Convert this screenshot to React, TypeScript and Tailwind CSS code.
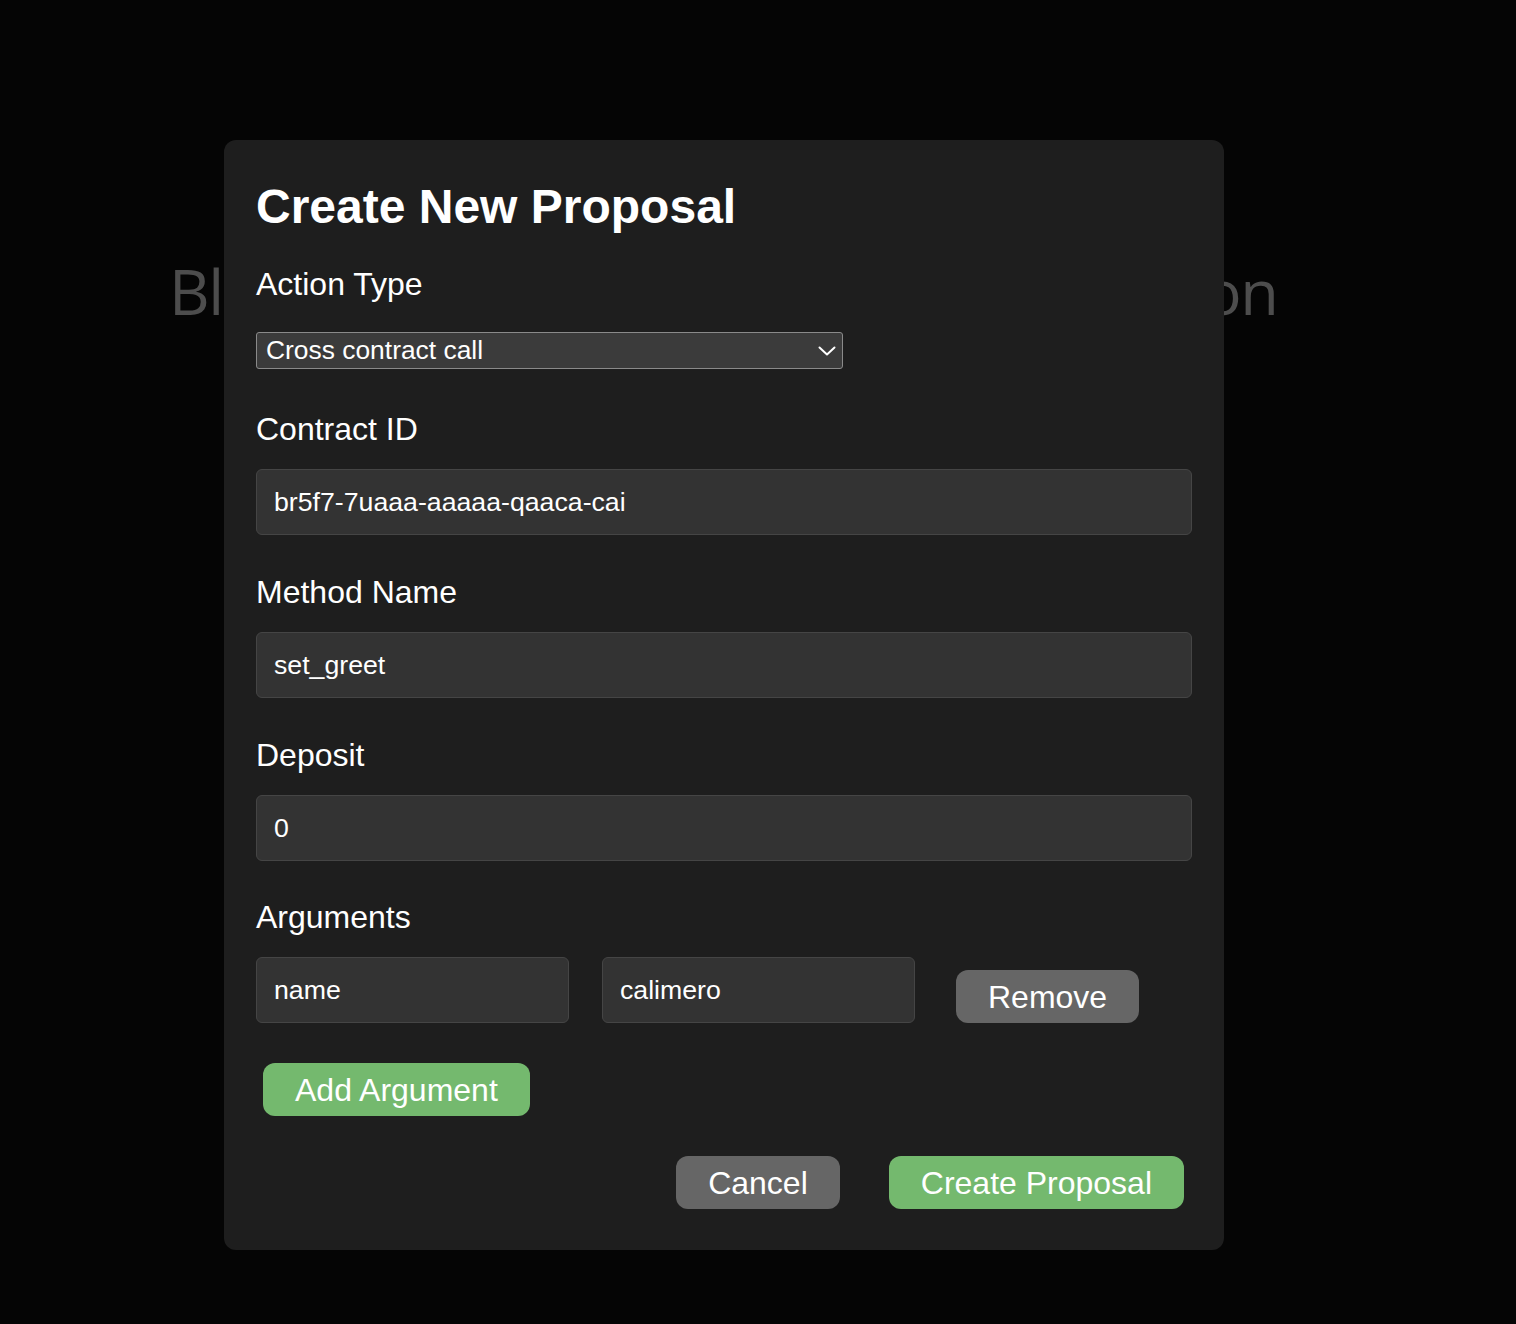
import { useState } from "react";

const sans = "font-['Liberation_Sans',Arial,sans-serif]";

const Field = ({ label, value, top }: { label: string; value: string; top: string }) => (
  <div>
    <label className={`block ${top} text-[32px] leading-none text-white`}>{label}</label>
    <input
      defaultValue={value}
      className="mt-6 block h-[66px] w-full rounded-md border border-[#454545] bg-[#333333] pl-[17px] pr-4 text-[26.7px] text-white outline-none"
    />
  </div>
);

const App = () => {
  const [args] = useState([{ key: "name", value: "calimero" }]);

  return (
    <div className={`relative h-[1324px] overflow-hidden bg-[#050505] ${sans}`}>
      <h1 className="whitespace-nowrap pl-[169px] pt-[259px] font-['Open_Sans',sans-serif] text-[63px] leading-none tracking-[-1.4px] text-[#4d4d4d]">
        Blockchain Proposals Demo Application
      </h1>

      <div className="absolute inset-0 pl-[224px] pt-[140px]">
        <div className="h-[1110px] w-[1000px] rounded-xl bg-[#1e1e1e] px-8 pt-8">
          <h2 className="mt-[11px] text-[48px] font-bold leading-none text-white">
            Create New Proposal
          </h2>

          <label className="mt-[37px] block text-[32px] leading-none text-white">
            Action Type
          </label>
          <div className="relative mt-8 w-[587px]">
            <select
              defaultValue="cross"
              className="block h-[37px] w-full appearance-none rounded-[3px] border border-[#8a8a8a] bg-[#3b3b3b] pl-[9px] text-[26.4px] leading-none text-white outline-none"
            >
              <option value="cross">Cross contract call</option>
              <option value="transfer">Transfer</option>
            </select>
            <svg
              className="pointer-events-none absolute right-[7px] top-[14px]"
              width="18"
              height="10"
              viewBox="0 0 18 10"
              fill="none"
            >
              <path d="M1.5 1.5 L9 8.5 L16.5 1.5" stroke="white" strokeWidth="2" strokeLinecap="round" strokeLinejoin="round" />
            </svg>
          </div>

          <Field label="Contract ID" value="br5f7-7uaaa-aaaaa-qaaca-cai" top="mt-[44px]" />
          <Field label="Method Name" value="set_greet" top="mt-[41px]" />
          <Field label="Deposit" value="0" top="mt-[41px]" />

          <label className="mt-[40px] block text-[32px] leading-none text-white">
            Arguments
          </label>
          {args.map((a, i) => (
            <div key={i} className="mt-6 flex items-end gap-[33px]">
              <input
                defaultValue={a.key}
                className="h-[66px] w-[313px] rounded-md border border-[#454545] bg-[#333333] pl-[17px] pr-4 text-[26.7px] text-white outline-none"
              />
              <input
                defaultValue={a.value}
                className="h-[66px] w-[313px] rounded-md border border-[#454545] bg-[#333333] pl-[17px] pr-4 text-[26.7px] text-white outline-none"
              />
              <button className="ml-2 h-[53px] rounded-xl bg-[#666666] px-8 text-[32px] leading-none text-white">
                Remove
              </button>
            </div>
          ))}

          <button className="ml-[7px] mt-[40px] block h-[53px] rounded-xl bg-[#74b96e] px-8 text-[32px] leading-none text-white">
            Add Argument
          </button>

          <div className="mt-[40px] flex justify-end gap-[49px] pr-2">
            <button className="h-[53px] rounded-xl bg-[#666666] px-8 text-[32px] leading-none text-white">
              Cancel
            </button>
            <button className="h-[53px] rounded-xl bg-[#74b96e] px-8 text-[32px] leading-none text-white">
              Create Proposal
            </button>
          </div>
        </div>
      </div>
    </div>
  );
};

export default App;
